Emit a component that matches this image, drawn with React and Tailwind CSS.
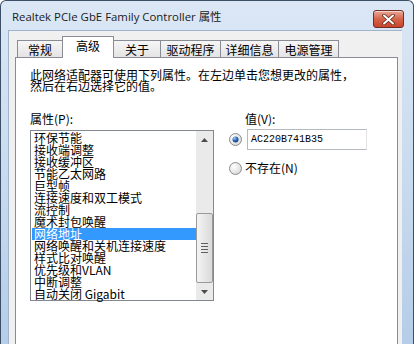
import React from 'react';

const cjk = { fontFamily: '"Noto Sans CJK SC", "Noto Sans", sans-serif' };

const tabs = [
  { label: '常规', w: 'w-[46px]' },
  { label: '高级', w: 'w-[52px]', active: true },
  { label: '关于', w: 'w-[48px]' },
  { label: '驱动程序', w: 'w-[61px]' },
  { label: '详细信息', w: 'w-[59px]' },
  { label: '电源管理', w: 'w-[61px]' },
];

const items = [
  '环保节能',
  '接收端调整',
  '接收缓冲区',
  '节能乙太网路',
  '巨型帧',
  '连接速度和双工模式',
  '流控制',
  '魔术封包唤醒',
  '网络地址',
  '网络唤醒和关机连接速度',
  '样式比对唤醒',
  '优先级和VLAN',
  '中断调整',
  '自动关闭 Gigabit',
];

const Radio = ({ checked }) => (
  <svg width="13" height="13" viewBox="0 0 13 13" className="shrink-0">
    <defs>
      <radialGradient id={checked ? 'rg1' : 'rg0'} cx="0.35" cy="0.35" r="0.8">
        <stop offset="0" stopColor="#ffffff" />
        <stop offset="1" stopColor="#d4d4d4" />
      </radialGradient>
      <radialGradient id="dot" cx="0.35" cy="0.3" r="0.8">
        <stop offset="0" stopColor="#9fd0f5" />
        <stop offset="0.5" stopColor="#2a67b8" />
        <stop offset="1" stopColor="#0f3a7a" />
      </radialGradient>
    </defs>
    <circle cx="6.5" cy="6.5" r="6" fill={`url(#${checked ? 'rg1' : 'rg0'})`} stroke="#8a8c8e" />
    {checked && <circle cx="6.5" cy="6.5" r="3" fill="url(#dot)" />}
  </svg>
);

const Arrow = ({ up }) => (
  <svg width="7" height="4" viewBox="0 0 7 4">
    {up ? <path d="M0 4 L3.5 0 L7 4 Z" fill="#4d4d4d" /> : <path d="M0 0 L3.5 4 L7 0 Z" fill="#4d4d4d" />}
  </svg>
);

export default function App() {
  return (
    <div
      className="relative flex h-[344px] w-[414px] flex-col overflow-hidden rounded-t-[6px] border-x border-t border-[#3d4f66] bg-gradient-to-b from-[#dbe7f5] via-[#c9dbef] to-[#b5cde8]"
    >
      {/* Title bar */}
      <div className="flex h-[29px] shrink-0 items-start justify-between pl-[11px] pr-[9px]">
        <span
          className="mt-[8px] text-[11.4px] leading-[16px] text-[#1b1b1b]"
          style={{ fontFamily: '"Open Sans", "Noto Sans CJK SC", sans-serif' }}
        >
          Realtek PCIe GbE Family Controller 属性
        </span>
        <div className="mt-[9px] flex h-[18px] w-[31px] items-center justify-center rounded-[3px] border border-[#6e2e26] bg-gradient-to-b from-[#e9a897] via-[#d5644b] to-[#c9432a] shadow-[inset_0_1px_0_rgba(255,255,255,0.5)]">
          <svg width="13" height="11" viewBox="0 0 13 11">
            <path d="M2 1.5 L11 9.5 M11 1.5 L2 9.5" stroke="#5a2a22" strokeWidth="3.6" strokeLinecap="round" />
            <path d="M2 1.5 L11 9.5 M11 1.5 L2 9.5" stroke="#ffffff" strokeWidth="2" strokeLinecap="round" />
          </svg>
        </div>
      </div>

      {/* Client area */}
      <div className="ml-[7px] flex w-[394px] flex-1 flex-col border-l border-t border-[#9fb3cb] bg-[#f0f0f0] pl-[6px] pr-[4px] pt-[5px]">
        {/* Tabs */}
        <div className="relative z-10 ml-[2px] flex h-[21px] items-end" style={cjk}>
          {tabs.map((t, i) =>
            t.active ? (
              <div
                key={t.label}
                className={`${t.w} -ml-px -mb-px flex h-[22px] justify-center border-x border-t border-[#898c95] bg-white pt-[2px] text-[12px] leading-[14px] text-black`}
              >
                {t.label}
              </div>
            ) : (
              <div
                key={t.label}
                className={`${t.w} ${i === 0 ? '' : '-ml-px'} flex h-[17px] justify-center border-x border-t border-[#898c95] bg-gradient-to-b from-[#f6f6f6] to-[#e4e4e4] pt-[2px] text-[12px] leading-[14px] text-black`}
              >
                {t.label}
              </div>
            )
          )}
        </div>

        {/* Panel */}
        <div className="flex-1 border-x border-t border-[#898c95] bg-white pl-[14px] pt-[11px]" style={cjk}>
          <p className="text-[12px] leading-[11px] text-black">
            此网络适配器可使用下列属性。在左边单击您想更改的属性，
            <br />
            然后在右边选择它的值。
          </p>

          <div className="mt-[21px] flex">
            {/* Left column */}
            <div className="flex w-[184px] flex-col">
              <div className="text-[12px] leading-[14px] text-black">属性(P):</div>
              <div className="mt-[4px] flex h-[171px] border border-[#828790] bg-white">
                <ul className="flex-1 pl-[1px] pt-[1px]">
                  {items.map((it) => (
                    <li
                      key={it}
                      className={`h-[12px] pl-[2px] text-[12px] leading-[12px] ${
                        it === '网络地址' ? 'bg-[#3399ff] text-white' : 'text-black'
                      }`}
                    >
                      {it}
                    </li>
                  ))}
                </ul>
                {/* Scrollbar */}
                <div className="flex w-[17px] flex-col bg-[#eaeaea]">
                  <div className="flex h-[17px] items-center justify-center">
                    <Arrow up />
                  </div>
                  <div className="flex-1" />
                  <div className="flex h-[70px] items-center justify-center rounded-[2px] border border-[#9a9a9a] bg-gradient-to-r from-[#f4f4f4] to-[#d9d9d9]">
                    <div className="flex flex-col gap-[2px]">
                      <div className="h-px w-[7px] bg-[#606060]" />
                      <div className="h-px w-[7px] bg-[#606060]" />
                      <div className="h-px w-[7px] bg-[#606060]" />
                      <div className="h-px w-[7px] bg-[#606060]" />
                    </div>
                  </div>
                  <div className="flex h-[17px] items-center justify-center">
                    <Arrow />
                  </div>
                </div>
              </div>
            </div>

            {/* Right column */}
            <div className="ml-[15px] flex flex-col">
              <div className="ml-[16px] text-[12px] leading-[14px] text-black">值(V):</div>
              <div className="mt-[3px] flex items-center">
                <Radio checked />
                <div className="ml-[5px] flex h-[21px] w-[120px] items-center border border-[#b5b9c0] border-r-[#e3e3e3] pl-[3px] text-[10px] leading-[12px] text-black" style={{ fontFamily: '"Liberation Mono", monospace' }}>
                  AC220B741B35
                </div>
              </div>
              <div className="mt-[11px] flex items-center">
                <Radio />
                <span className="ml-[3px] text-[12px] leading-[14px] text-black">不存在(N)</span>
              </div>
            </div>
          </div>
        </div>
      </div>
    </div>
  );
}
